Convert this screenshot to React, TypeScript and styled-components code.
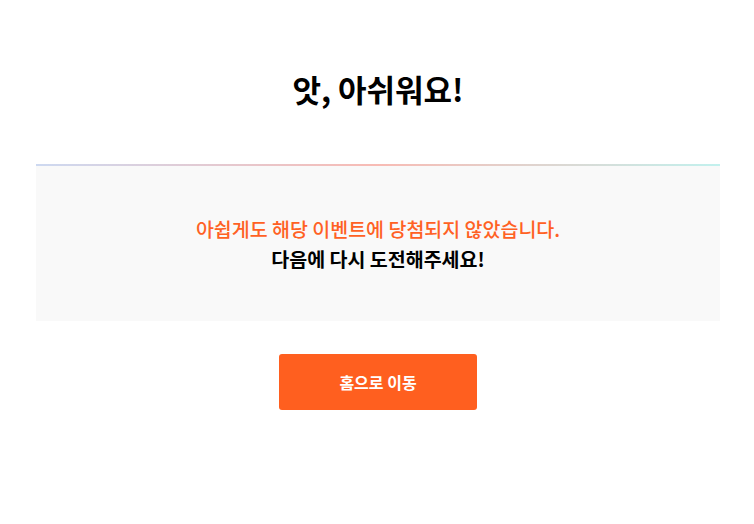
import styled, { createGlobalStyle } from 'styled-components';

const GlobalStyle = createGlobalStyle`
  body {
    margin: 0;
    background: #fff;
    font-family: 'Noto Sans CJK KR', 'Noto Sans', sans-serif;
  }
`;

const Page = styled.main`
  display: flex;
  flex-direction: column;
  align-items: center;
  padding: 0 34px 0 36px;
`;

const Title = styled.h1`
  margin: 64px 0 0;
  height: 50px;
  font-size: 31px;
  font-weight: 700;
  line-height: 50px;
  color: #000;
  letter-spacing: 0;
`;

const ResultBox = styled.section`
  margin-top: 50px;
  width: 684px;
  height: 157px;
  box-sizing: border-box;
  background: #f9f9f9;
  border-top: 2px solid transparent;
  border-image: linear-gradient(90deg, #cdd9f1 0%, #f8bbb4 50%, #c2f1ee 100%) 1;
  display: flex;
  flex-direction: column;
  align-items: center;
  justify-content: center;
  gap: 2px;
`;

const Line = styled.p<{ $accent?: boolean }>`
  margin: 0;
  font-size: 19.5px;
  line-height: 28px;
  font-weight: ${p => (p.$accent ? 500 : 700)};
  color: ${p => (p.$accent ? '#ff6124' : '#000')};
`;

const HomeButton = styled.button`
  margin-top: 33px;
  width: 198px;
  height: 56px;
  border: none;
  border-radius: 3px;
  background: #ff5f1f;
  color: #fff;
  font-family: inherit;
  font-size: 16px;
  font-weight: 700;
  cursor: pointer;
`;

export default function App() {
  return (
    <>
      <GlobalStyle />
      <Page>
        <Title>앗, 아쉬워요!</Title>
        <ResultBox>
          <Line $accent>아쉽게도 해당 이벤트에 당첨되지 않았습니다.</Line>
          <Line>다음에 다시 도전해주세요!</Line>
        </ResultBox>
        <HomeButton>홈으로 이동</HomeButton>
      </Page>
    </>
  );
}
